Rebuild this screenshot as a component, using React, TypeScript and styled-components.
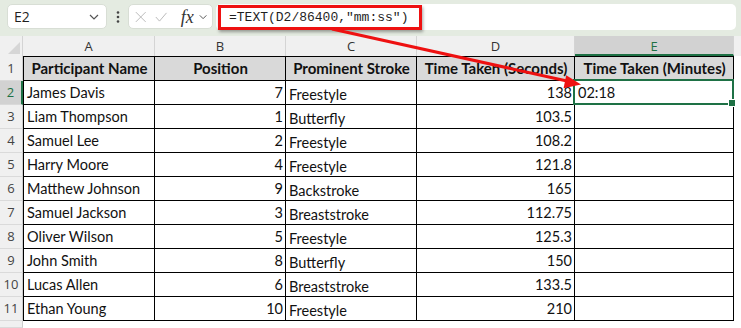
import React from "react";
import styled, { createGlobalStyle } from "styled-components";

const GREEN = "#1e7145";

const GlobalStyle = createGlobalStyle`
  html, body {
    margin: 0;
    padding: 0;
    background: #fff;
  }
  body {
    font-family: "Lato", "Liberation Sans", sans-serif;
  }
`;

interface Entry {
  name: string;
  pos: number;
  stroke: string;
  secs: string;
  mins?: string;
}

const entries: Entry[] = [
  { name: "James Davis", pos: 7, stroke: "Freestyle", secs: "138", mins: "02:18" },
  { name: "Liam Thompson", pos: 1, stroke: "Butterfly", secs: "103.5" },
  { name: "Samuel Lee", pos: 2, stroke: "Freestyle", secs: "108.2" },
  { name: "Harry Moore", pos: 4, stroke: "Freestyle", secs: "121.8" },
  { name: "Matthew Johnson", pos: 9, stroke: "Backstroke", secs: "165" },
  { name: "Samuel Jackson", pos: 3, stroke: "Breaststroke", secs: "112.75" },
  { name: "Oliver Wilson", pos: 5, stroke: "Freestyle", secs: "125.3" },
  { name: "John Smith", pos: 8, stroke: "Butterfly", secs: "150" },
  { name: "Lucas Allen", pos: 6, stroke: "Breaststroke", secs: "133.5" },
  { name: "Ethan Young", pos: 10, stroke: "Freestyle", secs: "210" },
];

const columns = ["A", "B", "C", "D", "E"];
const headings = [
  "Participant Name",
  "Position",
  "Prominent Stroke",
  "Time Taken (Seconds)",
  "Time Taken (Minutes)",
];

const Chevron = () => (
  <svg width="10" height="6" viewBox="0 0 10 6">
    <path d="M1 1l4 4 4-4" fill="none" stroke="#555" strokeWidth="1.2" />
  </svg>
);

const App: React.FC = () => {
  return (
    <Page>
      <GlobalStyle />
      <TopBar>
        <NameBox>
          <span>E2</span>
          <Chevron />
        </NameBox>
        <Dots>
          <svg width="4" height="12" viewBox="0 0 4 12">
            <circle cx="2" cy="1.5" r="1.3" fill="#444" />
            <circle cx="2" cy="6" r="1.3" fill="#444" />
            <circle cx="2" cy="10.5" r="1.3" fill="#444" />
          </svg>
        </Dots>
        <FxBox>
          <svg width="14" height="14" viewBox="0 0 14 14">
            <path d="M1 1l12 12M13 1L1 13" stroke="#b4b4b4" strokeWidth="1.1" />
          </svg>
          <svg width="15" height="12" viewBox="0 0 15 12">
            <path d="M1 6l4.5 5L14 1" fill="none" stroke="#b4b4b4" strokeWidth="1.1" />
          </svg>
          <FxLabel>fx</FxLabel>
          <Chevron />
        </FxBox>
        <FormulaInput>
          <Highlight>=TEXT(D2/86400,"mm:ss")</Highlight>
        </FormulaInput>
      </TopBar>

      <Sheet>
        <Corner>
          <svg width="12" height="12" viewBox="0 0 12 12">
            <path d="M12 0v12H0z" fill="#d6d6d6" />
          </svg>
        </Corner>
        {columns.map((c) => (
          <ColHeader key={c} $active={c === "E"}>
            {c}
          </ColHeader>
        ))}
        <ColHeader $filler />

        <RowHeader>1</RowHeader>
        {headings.map((h, i) => (
          <Cell key={h} $head $first={i === 0}>
            {h}
          </Cell>
        ))}
        <Blank />

        {entries.map((e, i) => (
          <React.Fragment key={e.name}>
            <RowHeader $active={i === 0}>{i + 2}</RowHeader>
            <Cell $first>{e.name}</Cell>
            <Cell $right>{e.pos}</Cell>
            <Cell $low>{e.stroke}</Cell>
            <Cell $right>{e.secs}</Cell>
            <Cell $selected={i === 0}>{e.mins ?? ""}</Cell>
            <Blank />
          </React.Fragment>
        ))}

        <RowHeader />
        <Blank />
        <Blank />
        <Blank />
        <Blank />
        <Blank />
        <Blank />
      </Sheet>

      <Arrow width="741" height="328" viewBox="0 0 741 328">
        <line x1="332" y1="29" x2="567" y2="81" stroke="#ee1111" strokeWidth="3" />
        <polygon points="581,84.5 563.6,88.3 566.2,75.2" fill="#ee1111" />
      </Arrow>
    </Page>
  );
};

const Page = styled.div`
  position: relative;
  width: 741px;
  height: 328px;
  overflow: hidden;
  background: #fff;
`;

const TopBar = styled.div`
  height: 36px;
  box-sizing: border-box;
  display: flex;
  align-items: flex-start;
  padding: 4px 5px 0 7px;
  background: #e4ebe1;
`;

const NameBox = styled.div`
  width: 100px;
  height: 25px;
  box-sizing: border-box;
  display: flex;
  align-items: center;
  justify-content: space-between;
  padding: 0 7px 0 6px;
  background: #fff;
  border: 1px solid #d8ded5;
  border-radius: 5px;
  font-family: "Open Sans", sans-serif;
  font-size: 14px;
  color: #1f1f1f;
`;

const Dots = styled.div`
  width: 21px;
  height: 25px;
  display: flex;
  align-items: center;
  justify-content: center;
`;

const FxBox = styled.div`
  width: 85px;
  height: 25px;
  box-sizing: border-box;
  display: flex;
  align-items: center;
  gap: 9px;
  padding: 0 5px 0 6px;
  background: #fff;
  border: 1px solid #d8ded5;
  border-radius: 5px;
`;

const FxLabel = styled.span`
  font-family: "Liberation Serif", serif;
  font-style: italic;
  font-size: 18px;
  color: #333;
  margin-left: 4px;
  margin-right: -4px;
  line-height: 1;
`;

const FormulaInput = styled.div`
  flex: 1;
  height: 26px;
  margin-left: 3px;
  padding-left: 2px;
  display: flex;
  align-items: center;
  background: #fff;
  border-radius: 5px;
`;

const Highlight = styled.div`
  width: 204px;
  height: 25px;
  box-sizing: border-box;
  display: flex;
  align-items: center;
  padding-left: 8px;
  border: 3px solid #ee1111;
  box-shadow: 1px 2px 3px rgba(0, 0, 0, 0.35);
  font-family: "Liberation Mono", monospace;
  font-size: 13px;
  color: #1f1f1f;
  white-space: nowrap;
`;

const Sheet = styled.div`
  display: grid;
  grid-template-columns: 23px 132px 131px 131px 158px 159px 1fr;
  grid-template-rows: 20px 25px repeat(10, 24px) 1fr;
  height: 292px;
`;

const Corner = styled.div`
  display: flex;
  align-items: flex-end;
  justify-content: flex-end;
  padding: 0 2px 2px 0;
  background: #f0f0f0;
  border-right: 1px solid #d4d4d4;
`;

const ColHeader = styled.div<{ $active?: boolean; $filler?: boolean }>`
  display: flex;
  align-items: center;
  justify-content: center;
  box-sizing: border-box;
  background: ${(p) => (p.$active ? "#d2d2d2" : "#f0f0f0")};
  color: ${(p) => (p.$active ? GREEN : "#333")};
  border-right: ${(p) => (p.$filler ? "none" : "1px solid #d4d4d4")};
  border-bottom: ${(p) => (p.$active ? `2px solid ${GREEN}` : "none")};
  font-family: "Open Sans", sans-serif;
  font-size: 13px;
  padding-top: ${(p) => (p.$active ? "2px" : "0")};
`;

const RowHeader = styled.div<{ $active?: boolean }>`
  display: flex;
  align-items: flex-end;
  justify-content: center;
  box-sizing: border-box;
  padding-bottom: 3px;
  background: ${(p) => (p.$active ? "#d2d2d2" : "#f0f0f0")};
  color: ${(p) => (p.$active ? GREEN : "#444")};
  border-bottom: 1px solid #dadada;
  border-right: ${(p) => (p.$active ? `2px solid ${GREEN}` : "1px solid #cdcdcd")};
  font-family: "Open Sans", sans-serif;
  font-size: 13px;
`;

const Cell = styled.div<{
  $head?: boolean;
  $first?: boolean;
  $right?: boolean;
  $low?: boolean;
  $selected?: boolean;
}>`
  position: relative;
  display: flex;
  align-items: flex-end;
  justify-content: ${(p) => (p.$head ? "center" : p.$right ? "flex-end" : "flex-start")};
  box-sizing: border-box;
  padding: 0 2px ${(p) => (p.$low ? "2px" : "4px")} 3px;
  background: ${(p) => (p.$head ? "#d9d9d9" : "#fff")};
  border-right: 1px solid #000;
  border-bottom: 1px solid #000;
  border-left: ${(p) => (p.$first ? "1px solid #000" : "none")};
  border-top: ${(p) => (p.$head ? "1px solid #000" : "none")};
  font-size: ${(p) => (p.$head ? "15px" : "14.5px")};
  font-weight: ${(p) => (p.$head ? 700 : 400)};
  color: #111;
  white-space: nowrap;
  overflow: hidden;
  line-height: 1;

  ${(p) =>
    p.$selected &&
    `
    overflow: visible;
    &::after {
      content: "";
      position: absolute;
      top: -2px;
      left: -2px;
      right: -1px;
      bottom: -1px;
      border: 2px solid ${GREEN};
    }
    &::before {
      content: "";
      position: absolute;
      right: -3px;
      bottom: -3px;
      width: 6px;
      height: 6px;
      background: ${GREEN};
      border: 1px solid #fff;
      z-index: 1;
    }
  `}
`;

const Blank = styled.div`
  background: #fff;
`;

const Arrow = styled.svg`
  position: absolute;
  left: 0;
  top: 0;
  pointer-events: none;
`;

export default App;
